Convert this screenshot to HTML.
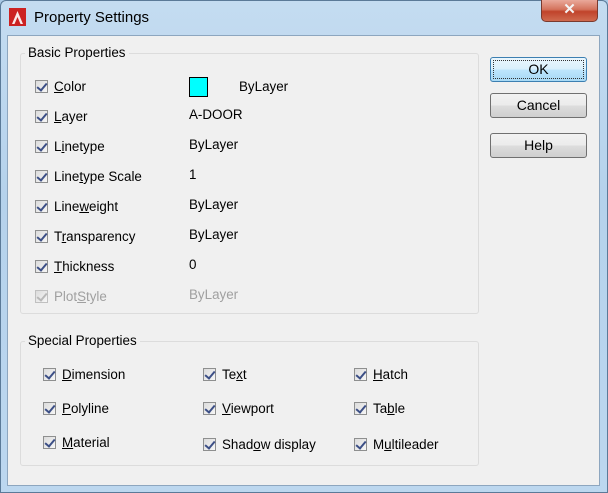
<!DOCTYPE html>
<html><head><meta charset="utf-8"><style>
*{margin:0;padding:0;box-sizing:border-box}
body{width:608px;height:493px;overflow:hidden;background:#a9c9e6;font-family:"Liberation Sans",sans-serif;font-size:13.4px;color:#000;position:relative}
.frame{position:absolute;left:0;top:0;width:608px;height:493px;background:linear-gradient(180deg,#c4dcf1 0%,#b5d2ec 40%,#bcd7ef 100%);border:1px solid #5b7a98;border-radius:6px 6px 0 0}
.title{position:absolute;left:34px;top:9px;font-size:15px;color:#000}
.close{position:absolute;left:541px;top:0;width:57px;height:22px;background:linear-gradient(180deg,#e9a99a 0%,#d4735c 45%,#c0432a 55%,#cf6a4f 100%);border:1px solid #7a3a2e;border-top:none;border-radius:0 0 5px 5px;color:#f4f4f4;font-weight:bold;font-size:15px;text-align:center;line-height:20px}
.client{position:absolute;left:7px;top:35px;width:593px;height:451px;background:#f0f0f0;border:1px solid #8da6bf}
.grp{position:absolute;border:1px solid #dcdcdc;border-radius:3px}
.gl{position:absolute;background:#f0f0f0;padding:0 3px;top:-9px;left:4px}
.it{position:absolute;white-space:nowrap}
.cb{display:inline-block;width:13px;height:13px;border:1px solid #8e8f8f;background:linear-gradient(135deg,#dcdcdc,#f6f6f6);vertical-align:-2px;margin-right:6px;position:relative}
.cb::after{content:"";position:absolute;left:3px;top:0px;width:4px;height:8px;border:solid #3c4f86;border-width:0 2px 2px 0;transform:rotate(40deg)}
.dis{color:#a0a0a0}.dis .cb::after{border-color:#b8b8b8}.dis .cb{border-color:#c0c0c0}
.val{position:absolute}
.btn{position:absolute;left:490px;width:97px;height:25px;border:1px solid #707070;border-radius:3px;background:linear-gradient(180deg,#f2f2f2 0%,#ebebeb 50%,#dddddd 51%,#cfcfcf 100%);text-align:center;line-height:23px;font-size:14px}
.ok{border-color:#3c7fb1;background:linear-gradient(180deg,#eaf6fd 0%,#d9f0fc 50%,#bee6fd 51%,#a7d9f5 100%)}
.ok::before{content:"";position:absolute;left:2px;top:2px;right:2px;bottom:2px;border:1px dotted #333}
</style></head><body>
<div class="frame"></div>
<svg style="position:absolute;left:9px;top:8px" width="17" height="18"><rect width="17" height="18" fill="#c22"/><path d="M3 16 L8.5 3 L14 16 L11.5 16 L8.5 9 L5.5 16Z" fill="#fff" opacity=".9"/></svg>
<div class="title">Property Settings</div>
<div class="close">✕</div>
<div class="client"></div>

<div class="grp" style="left:20px;top:53px;width:459px;height:261px"><span class="gl">Basic Properties</span></div>
<div class="grp" style="left:20px;top:341px;width:459px;height:125px"><span class="gl">Special Properties</span></div>

<div class="it" style="left:35px;top:79px"><span class="cb"></span><u>C</u>olor</div>
<div class="val" style="left:189px;top:77px;width:19px;height:20px;background:#0ff;border:1px solid #000"></div>
<div class="val" style="left:239px;top:79px">ByLayer</div>
<div class="it" style="left:35px;top:109px"><span class="cb"></span><u>L</u>ayer</div><div class="val" style="left:189px;top:107px">A-DOOR</div>
<div class="it" style="left:35px;top:139px"><span class="cb"></span>L<u>i</u>netype</div><div class="val" style="left:189px;top:137px">ByLayer</div>
<div class="it" style="left:35px;top:169px"><span class="cb"></span>Line<u>t</u>ype Scale</div><div class="val" style="left:189px;top:167px">1</div>
<div class="it" style="left:35px;top:199px"><span class="cb"></span>Line<u>w</u>eight</div><div class="val" style="left:189px;top:197px">ByLayer</div>
<div class="it" style="left:35px;top:229px"><span class="cb"></span>T<u>r</u>ansparency</div><div class="val" style="left:189px;top:227px">ByLayer</div>
<div class="it" style="left:35px;top:259px"><span class="cb"></span><u>T</u>hickness</div><div class="val" style="left:189px;top:257px">0</div>
<div class="it dis" style="left:35px;top:289px"><span class="cb"></span>Plot<u>S</u>tyle</div><div class="val dis" style="left:189px;top:287px">ByLayer</div>

<div class="it" style="left:43px;top:367px"><span class="cb"></span><u>D</u>imension</div>
<div class="it" style="left:203px;top:367px"><span class="cb"></span>Te<u>x</u>t</div>
<div class="it" style="left:354px;top:367px"><span class="cb"></span><u>H</u>atch</div>
<div class="it" style="left:43px;top:401px"><span class="cb"></span><u>P</u>olyline</div>
<div class="it" style="left:203px;top:401px"><span class="cb"></span><u>V</u>iewport</div>
<div class="it" style="left:354px;top:401px"><span class="cb"></span>Ta<u>b</u>le</div>
<div class="it" style="left:43px;top:435px"><span class="cb"></span><u>M</u>aterial</div>
<div class="it" style="left:203px;top:437px"><span class="cb"></span>Shad<u>o</u>w display</div>
<div class="it" style="left:354px;top:437px"><span class="cb"></span>M<u>u</u>ltileader</div>

<div class="btn ok" style="top:57px">OK</div>
<div class="btn" style="top:93px">Cancel</div>
<div class="btn" style="top:133px">Help</div>
</body></html>
